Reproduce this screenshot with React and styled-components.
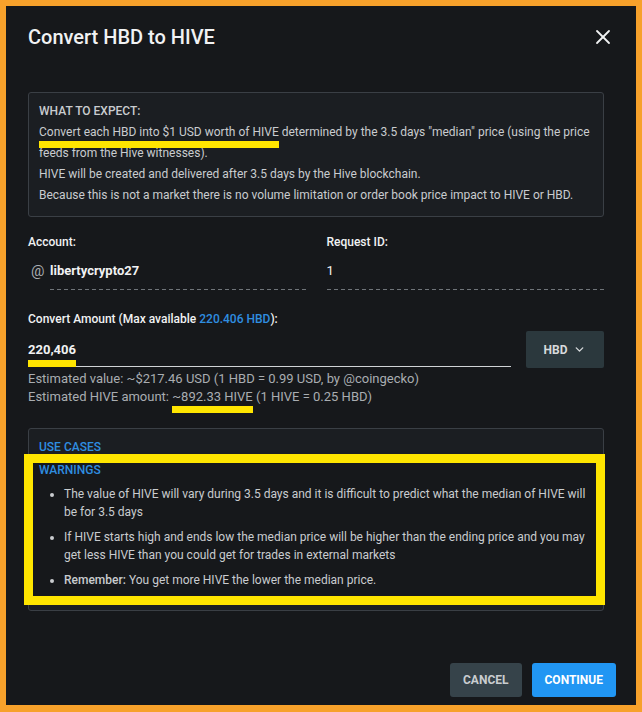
import React from "react";
import styled, { createGlobalStyle } from "styled-components";
import { X, ChevronDown } from "lucide-react";

const colors = {
  frame: "#f7a12b",
  modal: "#16181b",
  panel: "#1b1e22",
  line: "#3a3f45",
  text: "#c9cccf",
  muted: "#a9adb1",
  white: "#f1f2f3",
  blue: "#2f8ee0",
  accent: "#2196f3",
  mark: "#ffe500",
};

const GlobalStyle = createGlobalStyle`
  html, body {
    margin: 0;
    padding: 0;
    background: ${colors.frame};
  }
  * {
    box-sizing: border-box;
  }
  body {
    font-family: Roboto, "Liberation Sans", sans-serif;
  }
`;

export default function App() {
  return (
    <Frame>
      <GlobalStyle />
      <Modal>
        <Header>
          <Title>Convert HBD to HIVE</Title>
          <CloseButton aria-label="close">
            <X size={24} strokeWidth={1.8} />
          </CloseButton>
        </Header>

        <Body>
          <InfoBox>
            <strong>WHAT TO EXPECT:</strong>
            <p>
              <Marker $top={2}>Convert each HBD into $1 USD worth of HIVE</Marker>{" "}
              determined by the 3.5 days "median" price (using the price feeds
              from the Hive witnesses).
            </p>
            <p>HIVE will be created and delivered after 3.5 days by the Hive blockchain.</p>
            <p>
              Because this is not a market there is no volume limitation or order
              book price impact to HIVE or HBD.
            </p>
          </InfoBox>

          <Fields>
            <Field>
              <Label>Account:</Label>
              <Value>
                <At>@</At>
                <Dashed>libertycrypto27</Dashed>
              </Value>
            </Field>
            <Field>
              <Label>Request ID:</Label>
              <Value>
                <Dashed $light>1</Dashed>
              </Value>
            </Field>
          </Fields>

          <Label $spaced>
            Convert Amount (Max available <Link>220.406 HBD</Link>):
          </Label>
          <AmountRow>
            <AmountInput>
              <Marker $top={3}>220,406</Marker>
            </AmountInput>
            <AssetSelect>
              HBD <ChevronDown size={13} strokeWidth={2.5} />
            </AssetSelect>
          </AmountRow>
          <Estimates>
            <div>Estimated value: ~$217.46 USD (1 HBD = 0.99 USD, by @coingecko)</div>
            <div>
              Estimated HIVE amount: <Marker $top={2}>~892.33 HIVE</Marker> (1 HIVE =
              0.25 HBD)
            </div>
          </Estimates>

          <CasesBox>
            <SectionTitle>USE CASES</SectionTitle>
            <Warnings>
              <SectionTitle>WARNINGS</SectionTitle>
              <List>
                <li>
                  The value of HIVE will vary during 3.5 days and it is difficult to
                  predict what the median of HIVE will be for 3.5 days
                </li>
                <li>
                  If HIVE starts high and ends low the median price will be higher
                  than the ending price and you may get less HIVE than you could get
                  for trades in external markets
                </li>
                <li>
                  <b>Remember:</b> You get more HIVE the lower the median price.
                </li>
              </List>
            </Warnings>
          </CasesBox>
        </Body>

        <Footer>
          <Button>CANCEL</Button>
          <Button $primary>CONTINUE</Button>
        </Footer>
      </Modal>
    </Frame>
  );
}

const Frame = styled.div`
  width: 642px;
  height: 712px;
  padding: 6px 6px 7px 6px;
  background: ${colors.frame};
`;

const Modal = styled.div`
  display: flex;
  flex-direction: column;
  height: 100%;
  background: ${colors.modal};
`;

const Header = styled.div`
  display: flex;
  align-items: center;
  justify-content: space-between;
  padding: 19px 21px 0 22px;
`;

const Title = styled.h2`
  margin: 0;
  font-size: 20px;
  line-height: 24px;
  font-weight: 500;
  color: ${colors.white};
`;

const CloseButton = styled.button`
  display: flex;
  padding: 0;
  border: 0;
  background: none;
  color: ${colors.white};
  cursor: pointer;
`;

const Body = styled.div`
  display: flex;
  flex-direction: column;
  padding: 0 32px 0 22px;
  margin-top: 43px;
`;

const InfoBox = styled.div`
  padding: 8px 10px 10px;
  border: 1px solid ${colors.line};
  border-radius: 3px;
  background: ${colors.panel};
  color: ${colors.text};
  font-size: 12px;
  line-height: 21px;

  strong {
    font-weight: 500;
  }

  p {
    margin: 0;
  }
`;

const Marker = styled.span`
  position: relative;

  &::after {
    content: "";
    position: absolute;
    left: 0;
    right: 0;
    top: calc(100% + ${(p) => p.$top}px);
    height: 7px;
    background: ${colors.mark};
  }
`;

const Fields = styled.div`
  display: grid;
  grid-template-columns: 1fr 1fr;
  column-gap: 21px;
  margin-top: 18px;
`;

const Field = styled.div`
  display: flex;
  flex-direction: column;
`;

const Label = styled.div`
  font-size: 12px;
  line-height: 14px;
  font-weight: 500;
  color: ${colors.white};
  margin-top: ${(p) => (p.$spaced ? "22px" : "0")};
`;

const Link = styled.span`
  color: ${colors.blue};
`;

const Value = styled.div`
  display: flex;
  align-items: flex-start;
  margin-top: 12px;
`;

const At = styled.span`
  width: 22px;
  padding-left: 3px;
  font-size: 15px;
  line-height: 20px;
  color: ${colors.muted};
`;

const Dashed = styled.div`
  flex: 1;
  padding-bottom: 9px;
  font-size: 13px;
  line-height: 20px;
  font-weight: ${(p) => (p.$light ? 400 : 700)};
  color: ${colors.white};
  background-image: repeating-linear-gradient(
    to right,
    #6f7479 0 4px,
    transparent 4px 7px
  );
  background-size: 100% 1px;
  background-repeat: no-repeat;
  background-position: bottom left;
`;

const AmountRow = styled.div`
  display: flex;
  align-items: flex-end;
  gap: 15px;
  margin-top: 4px;
`;

const AmountInput = styled.div`
  flex: 1;
  height: 37px;
  display: flex;
  align-items: center;
  padding-top: 2px;
  border-bottom: 1px solid #d0d3d6;
  font-size: 13px;
  font-weight: 700;
  color: ${colors.white};
`;

const AssetSelect = styled.button`
  width: 78px;
  height: 37px;
  display: flex;
  align-items: center;
  justify-content: center;
  gap: 6px;
  margin-bottom: -1px;
  border: 0;
  border-radius: 2px;
  background: #2b383d;
  color: #d7dadc;
  font-family: inherit;
  font-size: 12px;
  font-weight: 700;
`;

const Estimates = styled.div`
  margin-top: 3px;
  font-size: 13px;
  line-height: 18px;
  color: ${colors.muted};
`;

const CasesBox = styled.div`
  margin-top: 22px;
  padding: 11px 10px 5px;
  border: 1px solid ${colors.line};
  border-radius: 3px;
  background: ${colors.panel};
`;

const SectionTitle = styled.div`
  font-size: 12px;
  line-height: 14px;
  font-weight: 500;
  color: ${colors.blue};
`;

const Warnings = styled.div`
  margin: 0 -12px 0 -15px;
  padding: 0 6px 7px 6px;
  border: 9px solid ${colors.mark};
  background: ${colors.modal};
`;

const List = styled.ul`
  margin: 8px 0 0;
  padding-left: 25px;
  font-size: 12px;
  line-height: 18px;
  color: ${colors.text};

  li + li {
    margin-top: 7px;
  }

  b {
    font-weight: 500;
  }
`;

const Footer = styled.div`
  display: flex;
  justify-content: flex-end;
  gap: 10px;
  margin-top: auto;
  padding: 0 20px 8px 0;
`;

const Button = styled.button`
  height: 34px;
  padding: 0 13px;
  border: 0;
  border-radius: 3px;
  background: ${(p) => (p.$primary ? colors.accent : "#36434a")};
  color: ${(p) => (p.$primary ? "#ffffff" : "#c9cdd0")};
  font-family: inherit;
  font-size: 12px;
  font-weight: 700;
  cursor: pointer;
`;
